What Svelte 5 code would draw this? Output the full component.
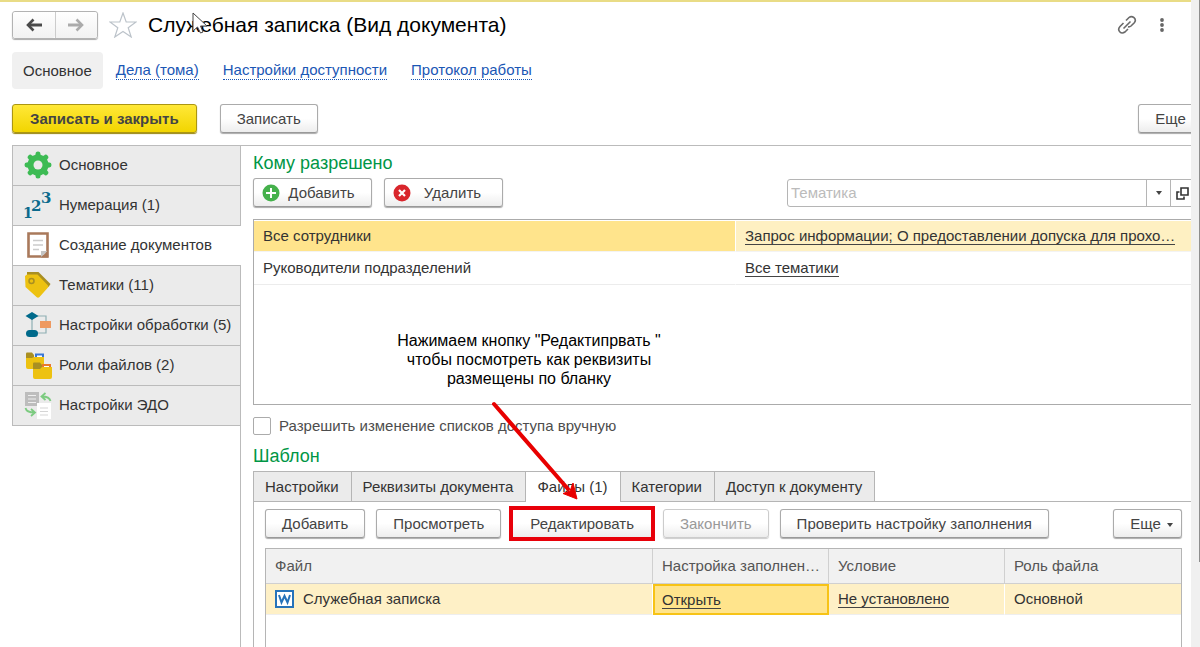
<script>
  const sections = [
    { icon: 'gear', label: 'Основное' },
    { icon: 'numbers', label: 'Нумерация (1)' },
    { icon: 'sheet', label: 'Создание документов', active: true },
    { icon: 'tag', label: 'Тематики (11)' },
    { icon: 'flow', label: 'Настройки обработки (5)' },
    { icon: 'folders', label: 'Роли файлов (2)' },
    { icon: 'exchange', label: 'Настройки ЭДО' }
  ];
  const links = ['Дела (тома)', 'Настройки доступности', 'Протокол работы'];
  const tabs = ['Настройки', 'Реквизиты документа', 'Файлы (1)', 'Категории', 'Доступ к документу'];
  let activeTab = $state(2);
  let manual = $state(false);
  let topic = $state('');
</script>

{#snippet sectionIcon(name)}
  <svg class="icon" width="28" height="28" viewBox="0 0 28 28" aria-hidden="true">
    {#if name === 'gear'}
      <g fill="#3dbb54">
        {#each [0, 45, 90, 135] as a}
          <path d="M11.6 3 Q11.400 .5 14 .5 Q16.600 .5 16.400 3 L17.500 6 V22 L16.400 25 Q16.600 27.500 14 27.500 Q11.400 27.500 11.600 25 L10.500 22 V6Z" transform={`rotate(${a} 14 14)`} />
        {/each}
        <circle cx="14" cy="14" r="10.500" />
      </g>
      <circle cx="14" cy="14" r="4.500" fill="#ebebeb" />
    {:else if name === 'numbers'}
      <g fill="#0b6a8c" font-family="DejaVu Serif, serif" font-weight="bold">
        <text x="-1" y="27" font-size="14">1</text>
        <text x="7" y="20" font-size="15">2</text>
        <text x="17" y="12" font-size="15">3</text>
      </g>
    {:else if name === 'sheet'}
      <path d="M4.500 2.500h19v23h-19z" fill="#fff" stroke="#a9795b" stroke-width="2.600" />
      <path d="M9 9.500h10M9 14h10M9 18.500h6" stroke="#ccc" stroke-width="1.500" />
      <path d="M17 26V20h7z" fill="#c4c4c4" />
      <path d="M17 26.500l7-7v7z" fill="#a9795b" />
    {:else if name === 'tag'}
      <path d="M3 1h11.500L26.500 13l-2 3L3 4z" fill="#a98f22" />
      <path d="M1 5l2-1.500h10.500L24 14.500q1 1 0 2l-8.500 9.500q-1.500 1.500-3 0L1.500 16z" fill="#edc211" />
      <circle cx="7.500" cy="10" r="2.500" fill="#edc211" stroke="#a98f22" stroke-width="1.500" />
    {:else if name === 'flow'}
      <path d="M8 5h14v17H8zM8 5v17" fill="none" stroke="#8fb0b4" stroke-width="1.200" />
      <path d="M8 1l6.500 4L8 9 1.500 5z" fill="#006a8b" />
      <rect x="2" y="19" width="12" height="7" rx="3.500" fill="#006a8b" />
      <rect x="16" y="10" width="11" height="7" fill="#ee9a61" />
    {:else if name === 'folders'}
      <path d="M2 2.500q0-1 1-1h5l2 2.500v5H2z" fill="#a98f22" />
      <path d="M12 7V3.500h7V7" fill="#fff" stroke="#3876d6" stroke-width="2" />
      <path d="M2 7h6l2-1h10v12H4q-2 0-2-2z" fill="#edc211" />
      <path d="M9 12.500q0-1 1-1h6l2 2.500v5H9z" fill="#a98f22" />
      <path d="M19 17v-3h7v3" fill="#fff" stroke="#e9792c" stroke-width="2" />
      <path d="M9 18h7l2-2h10v10q0 2-2 2H11q-2 0-2-2z" fill="#edc211" />
    {:else}
      <path d="M1 1h14v14H1z" fill="#bdbdbd" />
      <path d="M4 4.500h8M4 8h8M4 11.500h8" stroke="#eee" stroke-width="1.200" />
      <path d="M13 12h14v16H13z" fill="#fff" />
      <path d="M16 17h8M16 20.500h8M16 24h8" stroke="#d5d5d5" stroke-width="1.200" />
      <path d="M26.500 10q-1-4.500-8.500-4.500M21.500 2L17.500 5.500l4 3.500M1.500 17q1 4.500 9 4.500M7 18l4 3.500L7 25" fill="none" stroke="#7ccb80" stroke-width="1.800" />
    {/if}
  </svg>
{/snippet}

<div class="window">
  <main class="form">
    <header class="title-bar">
      <div class="history">
        <button aria-label="Назад">
          <svg width="18" height="14" viewBox="0 0 18 14"><path d="M17 7H4" fill="none" stroke="#4a4a4a" stroke-width="3" /><path d="M8.500 1.500L3 7l5.500 5.500" fill="none" stroke="#4a4a4a" stroke-width="2.600" /></svg>
        </button>
        <button aria-label="Вперед">
          <svg width="18" height="14" viewBox="0 0 18 14"><path d="M1 7h13" fill="none" stroke="#ababab" stroke-width="3" /><path d="M9.500 1.500L15 7l-5.500 5.500" fill="none" stroke="#ababab" stroke-width="2.600" /></svg>
        </button>
      </div>
      <button class="plain star" aria-label="Добавить в избранное">
        <svg width="28" height="26" viewBox="0 0 28 26"><path d="M14 1l3.200 9H27l-7.800 5.800 3 9.200L14 19.400 5.800 25l3-9.200L1 10h9.800z" fill="#fff" stroke="#bcc3ca" stroke-width="1.200" /></svg>
      </button>
      <h1>Служебная записка (Вид документа)</h1>
      <div class="tools">
        <button class="plain" aria-label="Получить ссылку">
          <svg width="20" height="20" viewBox="0 0 20 20" fill="none" stroke="#6a6a6a" stroke-width="1.600"><path d="M9 5.500l3-3q2.500-2 5 .2t.3 5L14 11q-1.500 1.200-3 .8M6.500 8L3 11.500q-2.500 2.800-.3 5.200t5.300.3l3-3M6.500 13.500l7-7" /></svg>
        </button>
        <button class="plain" aria-label="Дополнительно">
          <svg width="6" height="16" viewBox="0 0 6 16" fill="#666"><circle cx="3" cy="3" r="1.900" /><circle cx="3" cy="8" r="1.900" /><circle cx="3" cy="13" r="1.900" /></svg>
        </button>
      </div>
    </header>

    <nav class="links">
      <span class="current">Основное</span>
      {#each links as link}<a href="#top">{link}</a>{/each}
    </nav>

    <div class="commands">
      <button class="btn primary">Записать и закрыть</button>
      <button class="btn">Записать</button>
      <button class="btn more">Еще <i class="caret"></i></button>
    </div>

    <div class="body">
      <nav class="sections">
        {#each sections as s}
          <button class="section" class:active={s.active}>{@render sectionIcon(s.icon)}{s.label}</button>
        {/each}
      </nav>

      <section class="content">
        <h2>Кому разрешено</h2>
        <div class="access-bar">
          <button class="btn with-icon">
            <svg width="18" height="18" viewBox="0 0 18 18"><circle cx="9" cy="9" r="8.500" fill="#45b14c" /><path d="M9 4v10M4 9h10" stroke="#fff" stroke-width="2" /></svg>
            <span>Добавить</span>
          </button>
          <button class="btn with-icon">
            <svg width="18" height="18" viewBox="0 0 18 18"><circle cx="9" cy="9" r="8.500" fill="#d9262c" /><path d="M6 6l6 6M12 6l-6 6" stroke="#fff" stroke-width="2.200" /></svg>
            <span>Удалить</span>
          </button>
          <div class="lookup">
            <input type="text" placeholder="Тематика" aria-label="Тематика" bind:value={topic} />
            <button aria-label="Выбрать из списка"><i class="caret"></i></button>
            <button aria-label="Открыть">
              <svg width="13" height="13" viewBox="0 0 13 13" fill="none" stroke="#333" stroke-width="1.600"><path d="M5 1h7v7H5zM3.500 5H1v7h7V9.500" /></svg>
            </button>
          </div>
        </div>

        <div class="access-list">
          <table>
            <tbody>
              <tr class="selected"><td class="who">Все сотрудники</td><td><a href="#topics">Запрос информации; О предоставлении допуска для прохо…</a></td></tr>
              <tr><td class="who">Руководители подразделений</td><td><a href="#topics">Все тематики</a></td></tr>
            </tbody>
          </table>
        </div>

        <label class="check"><input type="checkbox" bind:checked={manual} />Разрешить изменение списков доступа вручную</label>

        <h2 class="template">Шаблон</h2>
        <div class="tabs" role="tablist">
          {#each tabs as tab, i}
            <button role="tab" aria-selected={i === activeTab} class:active={i === activeTab} onclick={() => (activeTab = i)}>{tab}</button>
          {/each}
        </div>
        <div class="panel">
          <div class="file-bar">
            <button class="btn">Добавить</button>
            <button class="btn">Просмотреть</button>
            <button class="btn marked">Редактировать</button>
            <button class="btn" disabled>Закончить</button>
            <button class="btn">Проверить настройку заполнения</button>
            <button class="btn end">Еще <i class="caret"></i></button>
          </div>
          <div class="files">
            <table>
              <colgroup><col class="c-file" /><col class="c-fill" /><col class="c-cond" /><col class="c-role" /></colgroup>
              <thead><tr><th>Файл</th><th>Настройка заполнен…</th><th>Условие</th><th>Роль файла</th></tr></thead>
              <tbody>
                <tr>
                  <td>
                    <div class="file">
                      <svg width="19" height="18" viewBox="0 0 19 18"><path d="M1 1h17v16H1z" fill="#fff" stroke="#2673ba" stroke-width="2" /><path d="M4 5l2.500 7.500L9.500 6l3 6.500L15 5" fill="none" stroke="#2673ba" stroke-width="2" /></svg>
                      Служебная записка
                    </div>
                  </td>
                  <td class="focus"><a href="#fill">Открыть</a></td>
                  <td><a href="#cond">Не установлено</a></td>
                  <td>Основной</td>
                </tr>
              </tbody>
            </table>
          </div>
        </div>
      </section>
    </div>
  </main>
  <div class="scroll"><div class="thumb"></div></div>

  <p class="note">Нажимаем кнопку "Редактипрвать "<br />чтобы посмотреть как реквизиты<br />размещены по бланку</p>
  <svg class="arrow" width="92" height="104" viewBox="0 0 92 104" aria-hidden="true">
    <path d="M4 4L78 89" stroke="#e80000" stroke-width="4" stroke-linecap="round" />
    <path d="M87 99L73 93.500 80 91 83 83z" fill="#e80000" stroke="#e80000" stroke-width="1" />
  </svg>
  <svg class="pointer" width="17" height="22" viewBox="0 0 17 22" aria-hidden="true">
    <path d="M1 1v18l4.500-4 3 6 2.500-1-2.500-6H15z" fill="#fff" stroke="#444" stroke-width="1" />
  </svg>
</div>

<style>
  :global(body) { margin: 0; background: #fff; }
  .window { position: relative; display: flex; height: 100vh; overflow: hidden; font: 15px/20px "Liberation Sans", Arial, sans-serif; color: #333; }
  .window * { box-sizing: border-box; }
  button, input { font: inherit; color: inherit; }
  button { white-space: nowrap; }
  h1, h2, p { margin: 0; font-weight: normal; }
  svg { display: block; flex: none; }

  .form { flex: 1; min-width: 0; display: flex; flex-direction: column; overflow: hidden; border-top: 2px solid #e9dc86; padding-left: 12px; }
  .scroll { width: 9px; background: #f0f0f0; display: flex; justify-content: flex-end; }
  .thumb { width: 1px; height: 562px; background: #8e8e8e; }

  .title-bar { display: flex; align-items: center; height: 46px; padding-right: 26px; }
  .history { display: flex; width: 86px; height: 28px; border: 1px solid #b3b3b3; border-radius: 3px; box-shadow: 0 1px 1px #aaa; }
  .history button { flex: 1; display: flex; align-items: center; justify-content: center; border: 0; padding: 0; background: linear-gradient(#fff, #f2f2f2); border-radius: 3px; }
  .history button + button { border-left: 1px solid #ccc; border-radius: 0 3px 3px 0; }
  .plain { border: 0; background: none; padding: 0; }
  .star { margin: 0 11px; }
  h1 { font-size: 21px; line-height: 28px; color: #000; white-space: nowrap; }
  .tools { margin-left: auto; display: flex; align-items: center; gap: 22px; }

  .links { display: flex; align-items: center; gap: 24px; margin-top: 4px; height: 37px; white-space: nowrap; }
  .current { padding: 9px 11px 8px; margin-right: -11px; background: #f0f0f0; border-radius: 4px; }
  .links a { color: #1b57b5; text-decoration: none; line-height: 18px; border-bottom: 1px dotted #1b57b5; }

  .btn { height: 29px; padding: 0 16px; border: 1px solid #ababab; border-bottom-color: #999; border-radius: 3px; background: linear-gradient(#fff 50%, #ededed); box-shadow: 0 1px 1px #aaa; color: #444; }
  .btn:disabled { color: #999; border-color: #ccc; box-shadow: 0 1px 1px #ccc; }
  .commands { display: flex; gap: 23px; margin: 15px -16px 12px 0; }
  .btn.primary { padding: 0 17px; font-weight: bold; border-color: #ab9612; background: linear-gradient(#ffe838, #f2d500); box-shadow: 0 1px 1px #988510; }
  .more { margin-left: auto; }
  .caret { display: inline-block; border: 3px solid transparent; border-top: 4px solid #444; border-bottom: 0; }
  .btn .caret { margin: 0 -8px 0 2px; vertical-align: 2px; }

  .body { flex: 1; min-height: 0; display: flex; border-top: 1px solid #bbb; }
  .sections { width: 229px; flex: none; border-right: 1px solid #bbb; }
  .section { display: flex; align-items: center; gap: 7px; width: 228px; height: 40px; padding: 0 0 1px 11px; border: 1px solid #bbb; border-width: 0 0 1px 1px; background: #ebebeb; text-align: left; }
  .section.active { width: 229px; background: #fff; }

  .content { flex: 1; min-width: 0; display: flex; flex-direction: column; padding-left: 12px; }
  h2 { font-size: 18px; line-height: 22px; margin-top: 6px; color: #009646; }
  .access-bar { display: flex; gap: 12px; margin: 4px -8px 12px 0; }
  .with-icon { display: flex; align-items: center; width: 119px; padding: 0 8px; }
  .with-icon span { flex: 1; text-align: center; }
  .lookup { display: flex; width: 412px; height: 28px; margin: 1px 0 0 auto; border: 1px solid #b5b5b5; border-radius: 3px; }
  .lookup input { flex: 1; min-width: 0; border: 0; padding: 0 3px; background: none; }
  .lookup input::placeholder { color: #bbb; opacity: 1; }
  .lookup button { width: 24px; display: flex; align-items: center; justify-content: center; border: 0; border-left: 1px solid #b5b5b5; background: none; padding: 0; }
  .lookup button:last-child { width: 28px; padding-right: 4px; }

  table { width: 100%; table-layout: fixed; border-collapse: separate; border-spacing: 0; }
  td, th { text-align: left; font-weight: normal; white-space: nowrap; }
  td a { color: inherit; text-decoration: none; border-bottom: 1px solid #444; display: inline-block; line-height: 17px; }
  .access-list { height: 186px; margin-right: -4px; border: 1px solid #ababab; padding-top: 1px; }
  .access-list td { height: 33px; padding: 0 10px 0 9px; border-bottom: 1px solid #ececec; }
  .access-list .who { width: 482px; border-right: 1px solid #fff; }
  .access-list .selected td { height: 31px; background: #fef0c2; border-bottom: 1px solid #f3f3f3; }
  .access-list .selected .who { background: #ffe48c; }

  .check { display: flex; align-items: center; gap: 8px; margin-top: 11px; color: #4d4d4d; }
  .check input { appearance: none; width: 18px; height: 18px; margin: 0; border: 1px solid #ababab; border-radius: 2px; background: #fff; }
  .check input:checked { background: #8b8b8b; }
  h2.template { margin-top: 9px; }

  .tabs { display: flex; margin-top: 4px; border-bottom: 1px solid #b5b5b5; }
  .tabs button { height: 30px; padding: 0 12px 0 11px; border: 1px solid #b5b5b5; border-width: 1px 1px 0 0; background: #ebebeb; }
  .tabs button:first-child { border-left-width: 1px; }
  .tabs button.active { height: 31px; margin-bottom: -1px; background: #fff; }
  .panel { flex: 1; min-height: 0; display: flex; flex-direction: column; padding: 7px 9px 0 11px; border-left: 1px solid #b5b5b5; }
  .file-bar { display: flex; gap: 11px; }
  .btn.marked { padding: 0 17px; outline: 4px solid #e8000a; outline-offset: -1px; border-radius: 0; }
  .end { margin-left: auto; }
  .files { flex: 1; margin-top: 10px; border: 1px solid #b5b5b5; border-bottom: 0; }
  .c-fill, .c-cond, .c-role { width: 176px; }
  .files th { height: 35px; padding: 0 9px; background: #f1f1f1; border-right: 1px solid #d0d0d0; border-bottom: 1px solid #d0d0d0; color: #555; }
  .files td { height: 31px; padding: 0 9px; background: #fef0c6; border-right: 1px solid #fff; border-bottom: 1px solid #eee; }
  .files th:last-child, .files td:last-child { border-right: 0; }
  .files td.focus { border: 2px solid #f7c316; background: #ffe48c; padding: 0 7px; }
  .file { display: flex; align-items: center; gap: 9px; }

  .note { position: absolute; left: 388px; top: 331px; width: 282px; text-align: center; font-size: 16px; line-height: 19px; color: #000; white-space: nowrap; }
  .arrow { position: absolute; left: 490px; top: 400px; }
  .pointer { position: absolute; left: 192px; top: 12px; }
</style>
